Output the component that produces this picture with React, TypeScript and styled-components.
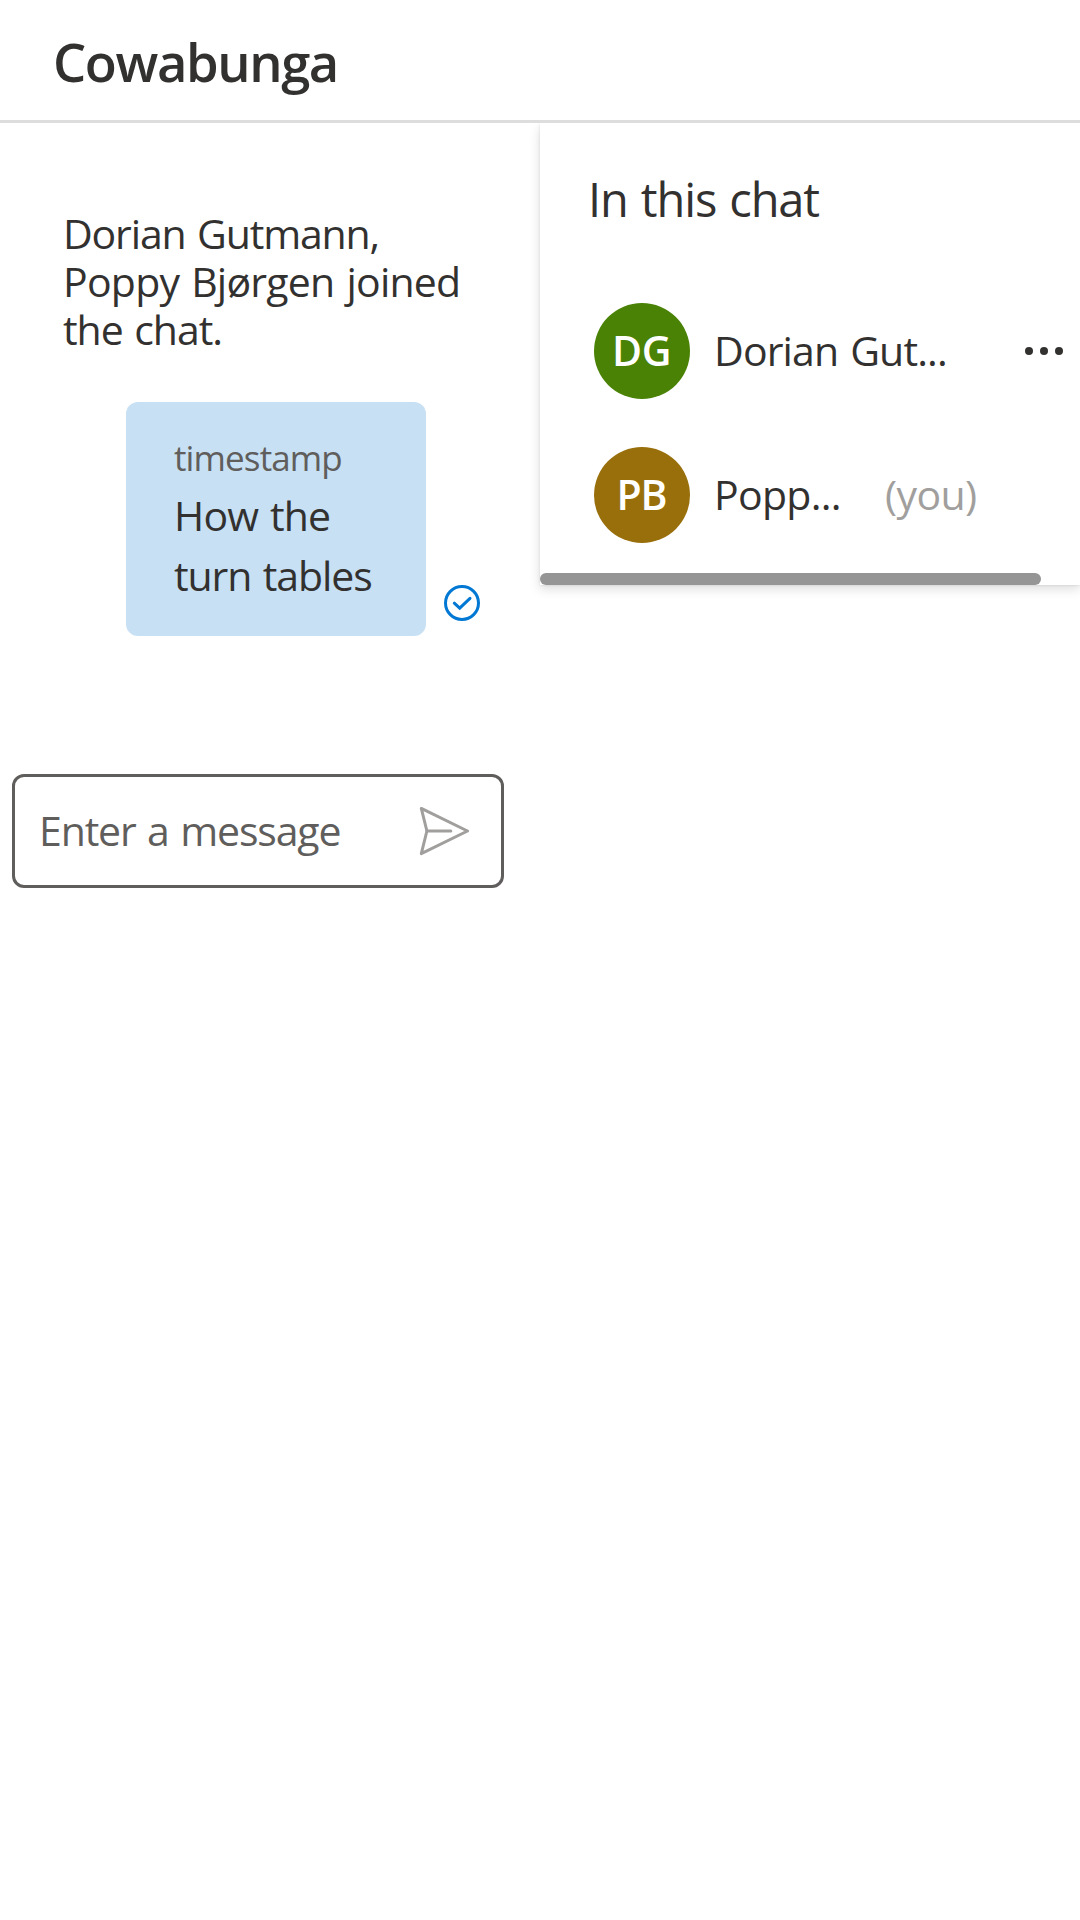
import React from 'react';
import styled, { createGlobalStyle } from 'styled-components';

const GlobalStyle = createGlobalStyle`
  * { box-sizing: border-box; }
  body {
    margin: 0;
    background: #ffffff;
    color: #323130;
    font-family: 'Open Sans', 'Noto Sans', sans-serif;
    overflow: hidden;
  }
`;

const Page = styled.div`
  display: flex;
  flex-direction: column;
  width: 1080px;
  height: 1920px;
`;

const Header = styled.header`
  display: flex;
  align-items: center;
  height: 123px;
  padding: 3px 53px 0;
  border-bottom: 3px solid #dddddd;
`;

const Title = styled.h1`
  margin: 0;
  font-size: 52.5px;
  line-height: 72px;
  font-weight: 600;
  letter-spacing: -1.4px;
`;

const Body = styled.main`
  display: flex;
  align-items: flex-start;
  flex: 1;
  overflow: hidden;
`;

const Column = styled.section`
  display: flex;
  flex-direction: column;
  width: 540px;
`;

const Text = styled.span<{ $track: number }>`
  display: block;
  white-space: nowrap;
  word-spacing: 2px;
  letter-spacing: ${(p) => p.$track}px;
`;

const SystemMessage = styled.div`
  padding: 86px 0 0 63px;
  font-size: 41px;
  line-height: 48px;
`;

const MessageRow = styled.div`
  display: flex;
  align-items: flex-end;
  gap: 18px;
  padding: 49px 0 0 126px;
`;

const Bubble = styled.div`
  width: 300px;
  height: 234px;
  padding: 28px 0 0 48px;
  border-radius: 12px;
  background: #c7e0f4;
`;

const Timestamp = styled.div`
  font-size: 35px;
  line-height: 55px;
  color: #605e5c;
`;

const MessageText = styled.div`
  font-size: 41px;
  line-height: 60px;
`;

const CheckIcon = styled.svg`
  display: block;
  width: 36px;
  height: 36px;
  margin-bottom: 15px;
`;

const Composer = styled.div`
  display: flex;
  align-items: center;
  justify-content: space-between;
  width: 492px;
  height: 114px;
  margin: 138px 0 0 12px;
  padding: 0 32px 0 24px;
  border: 3px solid #605e5c;
  border-radius: 12px;
`;

const Placeholder = styled.div`
  font-size: 41px;
  line-height: 56px;
  color: #605e5c;
  padding-bottom: 2px;
`;

const SendIcon = styled.svg`
  display: block;
  width: 50px;
  height: 50px;
`;

const Panel = styled.aside`
  display: flex;
  flex-direction: column;
  width: 540px;
  height: 462px;
  background: #ffffff;
  box-shadow: 0 4.8px 10.8px rgba(0, 0, 0, 0.132), 0 0.9px 2.7px rgba(0, 0, 0, 0.108);
`;

const PanelTitle = styled.h2`
  margin: 0;
  padding: 44px 0 0 48px;
  font-size: 47px;
  line-height: 64px;
  font-weight: 400;
`;

const People = styled.div`
  display: flex;
  flex-direction: column;
  gap: 48px;
  padding: 72px 15px 0 54px;
`;

const Person = styled.div`
  display: flex;
  align-items: center;
  height: 96px;
  font-size: 41px;
  line-height: 56px;
`;

const Avatar = styled.div<{ $color: string }>`
  display: flex;
  align-items: center;
  justify-content: center;
  width: 96px;
  height: 96px;
  margin-right: 24px;
  padding: 0 1px 2px 0;
  border-radius: 50%;
  background: ${(p) => p.$color};
  color: #ffffff;
  font-weight: 600;
`;

const Name = styled.div<{ $width: number }>`
  width: ${(p) => p.$width}px;
  padding-bottom: 2px;
`;

const You = styled.div`
  padding-bottom: 2px;
  color: #a19f9d;
`;

const MoreIcon = styled.svg`
  display: block;
  width: 42px;
  height: 12px;
  margin-left: auto;
`;

const Scrollbar = styled.div`
  width: 501px;
  height: 12px;
  margin-top: auto;
  border-radius: 6px;
  background: #959595;
`;

export default function App() {
  return (
    <Page>
      <GlobalStyle />
      <Header>
        <Title>Cowabunga</Title>
      </Header>
      <Body>
        <Column>
          <SystemMessage>
            <Text $track={-1.15}>Dorian Gutmann, </Text>
            <Text $track={-0.76}>Poppy Bjørgen joined </Text>
            <Text $track={-1.05}>the chat.</Text>
          </SystemMessage>
          <MessageRow>
            <Bubble>
              <Timestamp>
                <Text $track={-0.88}>timestamp</Text>
              </Timestamp>
              <MessageText>
                <Text $track={-0.85}>How the </Text>
                <Text $track={-1.1}>turn tables</Text>
              </MessageText>
            </Bubble>
            <CheckIcon viewBox="0 0 36 36" fill="none" stroke="#0078d4">
              <circle cx="18" cy="18" r="16.5" strokeWidth="3" />
              <path d="M10.3 18.2 15.7 23.2 26 13.4" strokeWidth="3" strokeLinecap="round" />
            </CheckIcon>
          </MessageRow>
          <Composer>
            <Placeholder>
              <Text $track={-1.15}>Enter a message</Text>
            </Placeholder>
            <SendIcon
              viewBox="0 0 50 50"
              fill="none"
              stroke="#a19f9d"
              strokeWidth="3"
              strokeLinecap="round"
              strokeLinejoin="round"
            >
              <path d="M2.3 2.4 48.5 25 2.3 47.6 7.9 25Z" />
              <path d="M7.9 25H31.8" />
            </SendIcon>
          </Composer>
        </Column>
        <Panel>
          <PanelTitle>
            <Text $track={-1.12}>In this chat</Text>
          </PanelTitle>
          <People>
            <Person>
              <Avatar $color="#498205">
                <Text $track={-0.5}>DG</Text>
              </Avatar>
              <Name $width={262}>
                <Text $track={-0.85}>Dorian Gut...</Text>
              </Name>
              <MoreIcon viewBox="0 0 42 12" fill="#323130">
                <circle cx="6" cy="6" r="4" />
                <circle cx="21" cy="6" r="4" />
                <circle cx="36" cy="6" r="4" />
              </MoreIcon>
            </Person>
            <Person>
              <Avatar $color="#986f0b">
                <Text $track={-1}>PB</Text>
              </Avatar>
              <Name $width={171}>
                <Text $track={-0.7}>Popp...</Text>
              </Name>
              <You>
                <Text $track={-0.6}>(you)</Text>
              </You>
            </Person>
          </People>
          <Scrollbar />
        </Panel>
      </Body>
    </Page>
  );
}
